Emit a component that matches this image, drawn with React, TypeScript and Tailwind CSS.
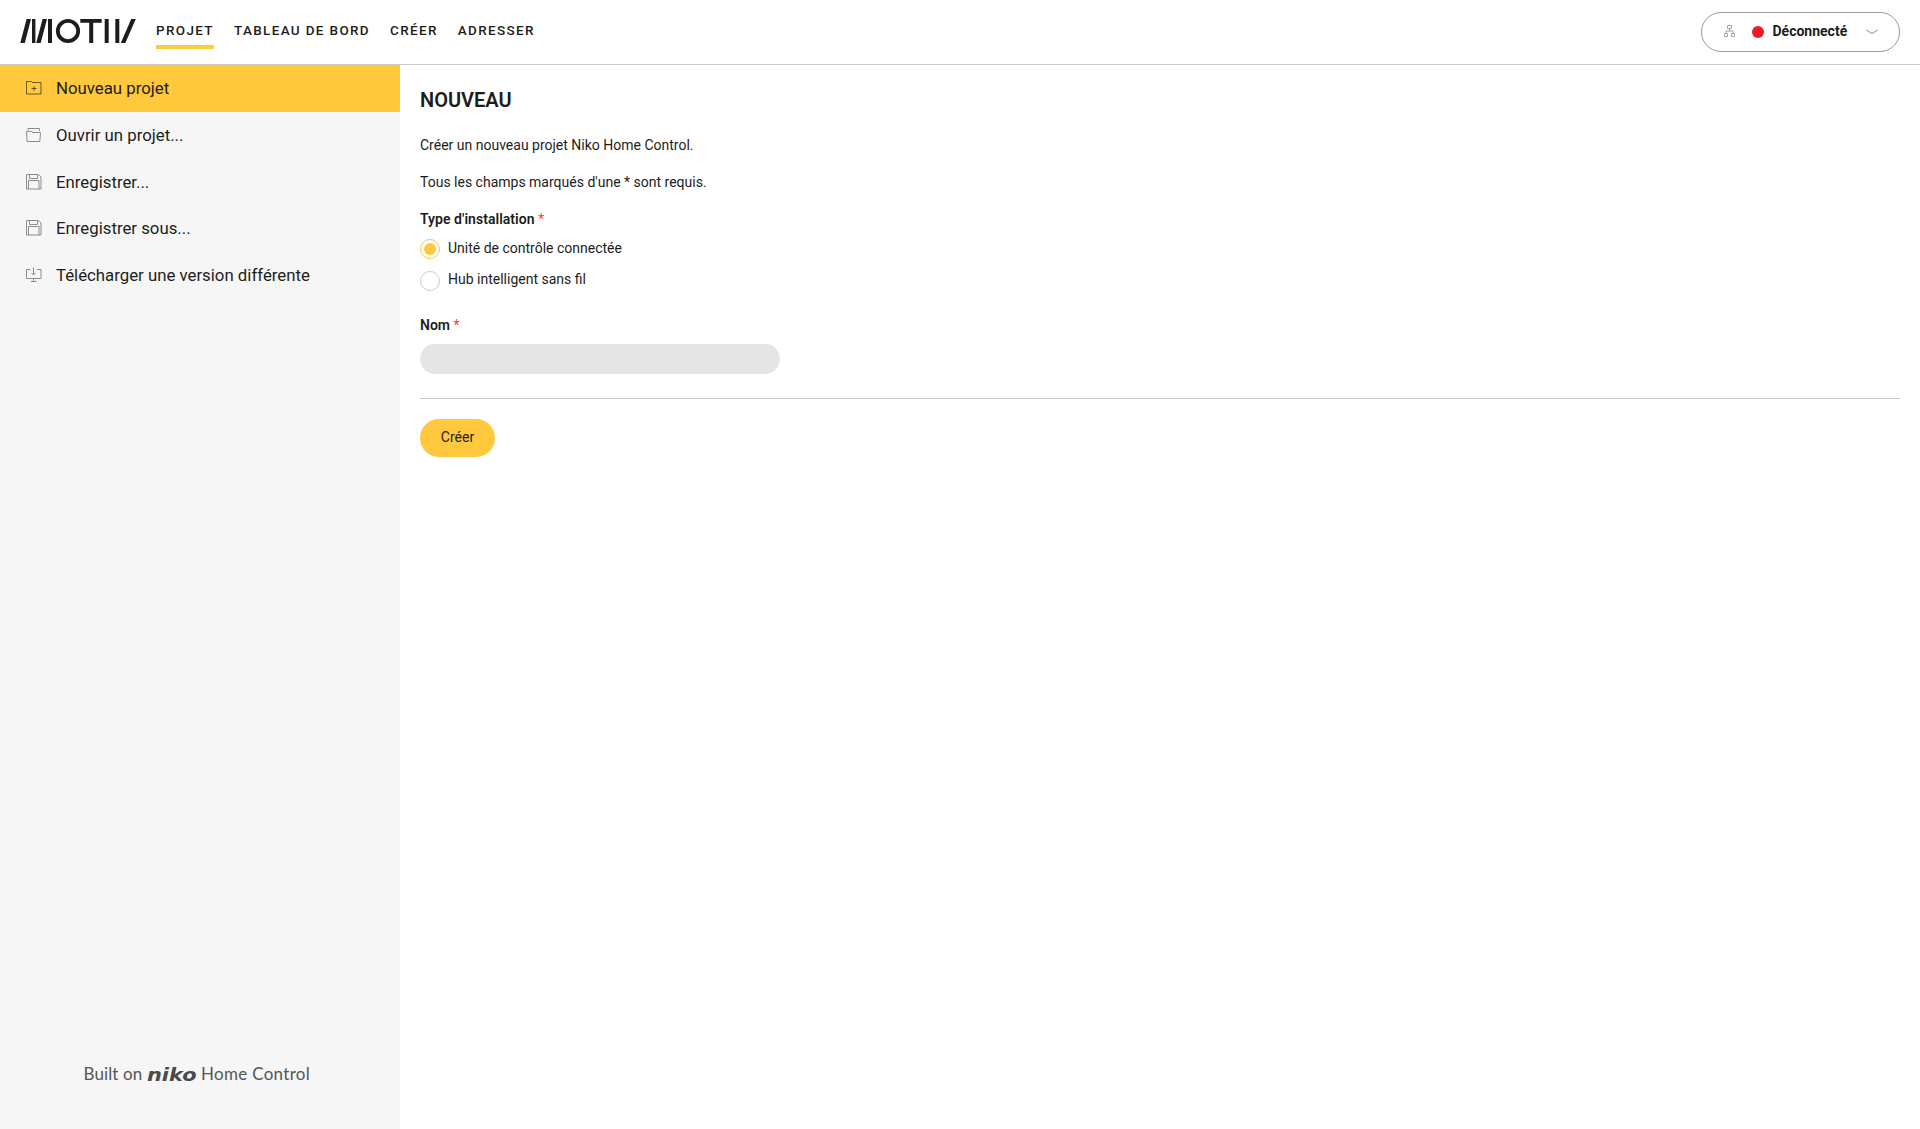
import React from "react";

function MotivLogo() {
  return (
    <svg width="117" height="26" viewBox="20 18 117 26" className="shrink-0" fill="#1d1d1b" aria-label="Motiv">
      <path d="M20.3 43H24.8L31 19H26.6Z" />
      <path d="M32 19H35.4V43H32Z" />
      <path d="M36.2 43H40.7L47 19H42.6Z" />
      <path d="M48 19H52V43H48Z" />
      <circle cx="68" cy="31" r="10.2" fill="none" stroke="#1d1d1b" strokeWidth="3.8" />
      <path d="M80.3 19H101.7V22.8H93.2V43H89.2V22.8H80.3Z" />
      <path d="M104.7 19H108.7V43H104.7Z" />
      <path d="M115.3 19H119.3V43H115.3Z" />
      <path d="M120.8 43H125.3L135.8 19H131.2Z" />
    </svg>
  );
}

const navItems = ["PROJET", "TABLEAU DE BORD", "CRÉER", "ADRESSER"];

function Header() {
  return (
    <header className="flex h-[65px] shrink-0 items-start justify-between border-b border-[#cbcbcb] bg-white px-5">
      <div className="flex items-start">
        <div className="pt-[18px]">
          <MotivLogo />
        </div>
        <nav className="ml-[19px] flex gap-5 pt-5">
          {navItems.map((label, i) => (
            <a
              key={label}
              className={
                "block h-[29px] border-b-4 text-[13.5px] leading-[20px] font-medium tracking-[1.34px] " +
                (i === 0 ? "border-[#ffc83d]" : "border-transparent")
              }
            >
              {label}
            </a>
          ))}
        </nav>
      </div>
      <button className="mt-3 flex h-10 w-[199px] items-center rounded-full border border-[#999] pl-[21px] text-left">
        <svg className="mb-[2px]" width="13" height="12" viewBox="0 0 13 12" fill="none" stroke="#a3a3a3">
          <path d="M4.500 .5h4v3h-4zM6.500 3.500v2.500M3 8V6h7v2M1.500 8.500h3v3h-3zM8.500 8.500h3v3h-3z" />
        </svg>
        <span className="ml-4 size-3 rounded-full bg-[#ed1c24]" />
        <span className="ml-[8.500px] w-[74.500px] pb-[2px] text-[14px] leading-5 font-bold whitespace-nowrap">Déconnecté</span>
        <svg className="ml-[19px]" width="12" height="6" viewBox="0 0 12 6" fill="none" stroke="#8a8a8a">
          <path d="M.3 .8L6 4.600L11.700 .8" />
        </svg>
      </button>
    </header>
  );
}

function FolderPlus() {
  return (
    <svg width="16" height="16" viewBox="0 0 16 16" fill="none" stroke="#1d1d1b" strokeOpacity=".65">
      <path d="M.5 1.500h5l1 1h8.500v11.500H.5zM8 6v5M5.500 8.500h5" />
    </svg>
  );
}

function FolderOpen() {
  return (
    <svg width="16" height="16" viewBox="0 0 16 16" fill="none" stroke="#8c8c8c">
      <path d="M2 3.500V1.500h11.500V4M.5 4.500h5l1.500 1h7.500l-.7 9H1.200z" />
    </svg>
  );
}

function Floppy() {
  return (
    <svg width="16" height="16" viewBox="0 0 16 16" fill="none" stroke="#8c8c8c">
      <path d="M.5 .5h12l2.500 2.500v12H.5zM3.500 .5v4h8v-4M2.500 15v-8.500h10.500v8.500" />
    </svg>
  );
}

function DownloadScreen() {
  return (
    <svg width="16" height="16" viewBox="0 0 16 16" fill="none" stroke="#8c8c8c">
      <path d="M4.500 2.500H.5v9h14.500v-9H11M7.500 .5v7.500M5.500 6L7.500 8L9.500 6M7.500 11.500v3M5 14.500h5.500" />
    </svg>
  );
}

const menu = [
  { label: "Nouveau projet", Icon: FolderPlus },
  { label: "Ouvrir un projet...", Icon: FolderOpen },
  { label: "Enregistrer...", Icon: Floppy },
  { label: "Enregistrer sous...", Icon: Floppy },
  { label: "Télécharger une version différente", Icon: DownloadScreen },
];

function Sidebar() {
  return (
    <aside className="flex w-[400px] shrink-0 flex-col justify-between bg-[#f6f6f6]">
      <ul>
        {menu.map(({ label, Icon }, i) => (
          <li
            key={label}
            className={"flex h-[46.7px] items-center gap-[14px] pl-[26px] " + (i === 0 ? "bg-[#ffc83d]" : "")}
          >
            <Icon />
            <span className="text-[16.8px] leading-6">{label}</span>
          </li>
        ))}
      </ul>
      <div className="mb-[43px] flex h-6 items-center pl-[83.500px] font-['Lato',sans-serif] text-[17px] text-[#555]">
        <span className="w-[63.500px] tracking-[0.1px] whitespace-nowrap">Built on</span>
        <svg width="52" height="24" viewBox="0 0 52 24" className="shrink-0 overflow-visible" fill="#4a4a4a">
          <text x="0" y="18.500" textLength="49.500" lengthAdjust="spacingAndGlyphs" fontFamily="DejaVu Sans" fontWeight="700" fontStyle="italic" fontSize="18.500">niko</text>
        </svg>
        <span className="ml-[2px] tracking-[0.3px] whitespace-nowrap">Home Control</span>
      </div>
    </aside>
  );
}

function Radio({ label, checked }: { label: string; checked?: boolean }) {
  return (
    <label className="flex h-5 items-start gap-2">
      <span
        className={
          "flex size-5 items-center justify-center rounded-full border " +
          (checked ? "border-[#ffc83d]" : "border-[#ccc]")
        }
      >
        {checked && <span className="size-3 rounded-full bg-[#ffc83d]" />}
      </span>
      <span className={checked ? "leading-[18px]" : "leading-4"}>{label}</span>
    </label>
  );
}

function Required() {
  return <span className="font-normal text-[#f44336]">*</span>;
}

export default function App() {
  return (
    <div className="flex h-[1129px] flex-col overflow-hidden bg-white font-['Roboto',sans-serif] text-[#1d1d1b]">
      <Header />
      <div className="flex min-h-0 flex-1">
        <Sidebar />
        <main className="flex-1 px-5 text-[14px] leading-5">
          <h1 className="pt-[23px] text-[20px] leading-6 font-semibold">NOUVEAU</h1>
          <p className="mt-[23px]">Créer un nouveau projet Niko Home Control.</p>
          <p className="mt-[17px]">Tous les champs marqués d'une * sont requis.</p>
          <p className="mt-[17px] font-semibold tracking-[0.04px]">
            Type d'installation <Required />
          </p>
          <div className="mt-[10px] flex flex-col gap-3">
            <Radio label="Unité de contrôle connectée" checked />
            <Radio label="Hub intelligent sans fil" />
          </div>
          <p className="mt-6 font-semibold">
            Nom <Required />
          </p>
          <input className="mt-[9px] block h-[30px] w-[360px] rounded-full bg-[#e5e5e5] px-4 outline-none" />
          <div className="mt-6 h-px bg-[#c8c8c8]" />
          <button className="mt-5 block h-[38px] w-[75px] rounded-full bg-[#ffc83d] pb-[2px]">Créer</button>
        </main>
      </div>
    </div>
  );
}
